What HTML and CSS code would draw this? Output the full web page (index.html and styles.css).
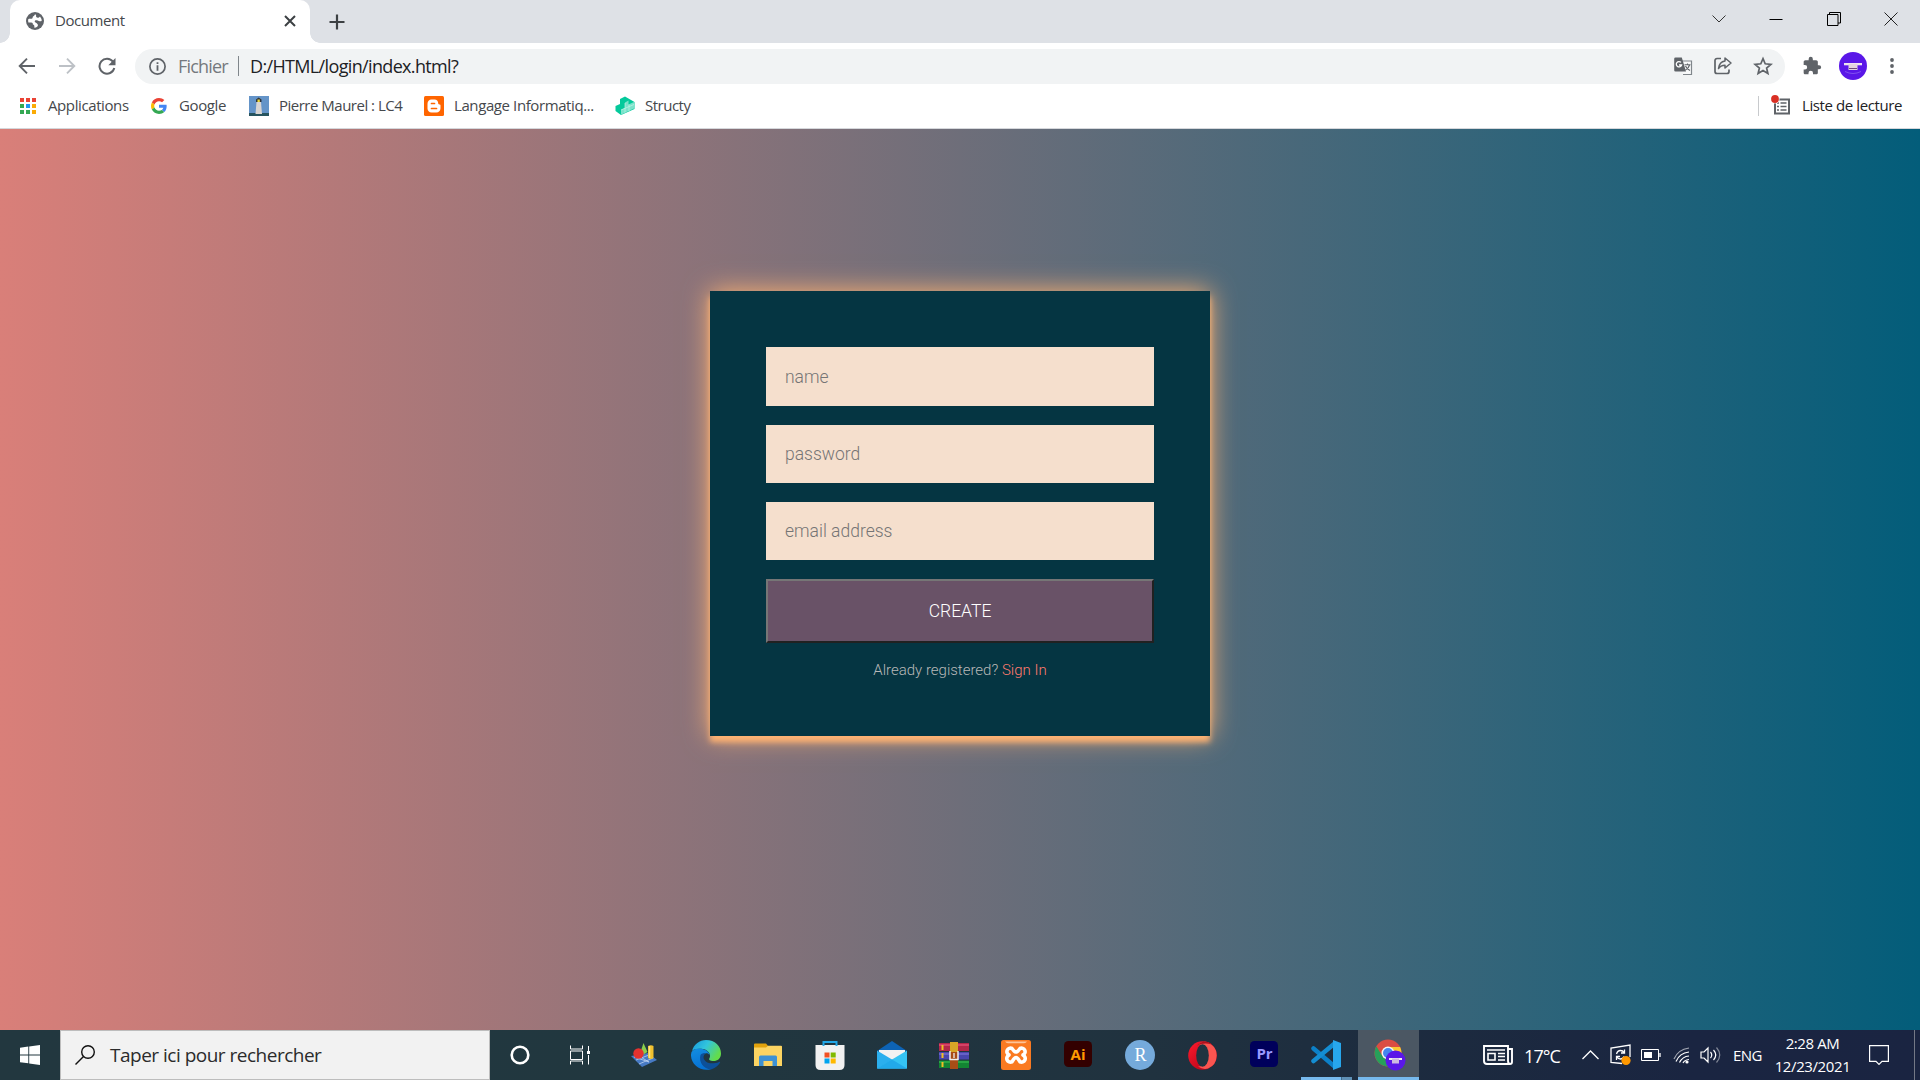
FILE: index.html
```html
<!DOCTYPE html>
<html lang="fr">
<head>
<meta charset="utf-8">
<title>Document</title>
<link rel="stylesheet" href="styles.css">
</head>
<body>
<div class="screen">
  <header class="tabstrip">
    <div class="tab">
      <svg class="globe" width="18" height="18" viewBox="0 0 18 18"><circle cx="9" cy="9" r="9" fill="#5f6368"/><path d="M9.3 2.2c-1 .8-.9 1.6-2 2-.9.5-.3 1.600-1.100 2.300-.9.5-2.400.3-3.900.4A7 7 0 0 0 2.400 10.500h2.800c1.500 0 1.600.8 1.700 2 .9.2 1.600.400 1.500 3.200C10.900 16 12.500 14 11.800 12.600c-.7-1.700-3-1.800-3.100-3-.1-1.300 1.300-1.700 2.400-1.300 1.100.500 1.500 1.200 4.600.6A7 7 0 0 0 14 4.400c-1 1.600-3.700 1.700-3.900.2-.1-1 .5-1.400-.8-2.400z" fill="#fff"/></svg>
      <span class="tab-title">Document</span>
      <svg class="tab-close" width="12" height="12" viewBox="0 0 12 12" stroke="#3c4043" stroke-width="2"><path d="M1 1l10 10M11 1L1 11"/></svg>
    </div>
    <svg class="newtab" width="16" height="16" viewBox="0 0 16 16" stroke="#3c4043" stroke-width="2.200"><path d="M8 .5v15M.5 8h15"/></svg>
    <div class="window-controls">
      <svg width="14" height="14" viewBox="0 0 14 14" fill="none" stroke="#333"><path d="M.5 3.500L7 10l6.500-6.500"/></svg>
      <svg width="14" height="14" viewBox="0 0 14 14" stroke="#000"><path d="M.5 7.500h13"/></svg>
      <svg width="14" height="14" viewBox="0 0 14 14" fill="none" stroke="#000"><path d="M.5 2.500h10.500v11H.5zM2.500 2.500v-2h11v10.500h-2.500"/></svg>
      <svg width="14" height="14" viewBox="0 0 14 14" stroke="#222"><path d="M.5.500l13 13M13.500.500l-13 13"/></svg>
    </div>
  </header>

  <nav class="toolbar">
    <svg class="nav-icon" width="18" height="18" viewBox="0 0 18 18" fill="none" stroke="#5f6368" stroke-width="1.900"><path d="M17 9H2M9 1.700L1.700 9 9 16.300"/></svg>
    <svg class="nav-icon" width="18" height="18" viewBox="0 0 18 18" fill="none" stroke="#bdc1c6" stroke-width="1.900"><path d="M1 9h15M9 1.700L16.300 9 9 16.300"/></svg>
    <svg class="nav-icon" width="18" height="18" viewBox="0 0 18 18"><path d="M15 4.600A7.500 7.500 0 1 0 16.300 11" fill="none" stroke="#5f6368" stroke-width="2"/><path d="M17.500 1v7.200h-7.200z" fill="#5f6368"/></svg>
    <div class="omnibox">
      <svg width="17" height="17" viewBox="0 0 17 17"><circle cx="8.500" cy="8.500" r="7.600" fill="none" stroke="#5f6368" stroke-width="1.700"/><path d="M7.600 4.200h1.800v1.900H7.600zM7.600 7.300h1.800v5.500H7.600z" fill="#5f6368"/></svg>
      <span class="scheme">Fichier</span>
      <span class="bar"></span>
      <span class="url">D:/HTML/login/index.html?</span>
      <div class="page-actions">
        <svg width="20" height="20" viewBox="0 0 20 20"><path d="M8 5h10.500v13.500H10" fill="#f8f9fa" stroke="#80868b" stroke-width="1.200"/><path d="M2.500 1.500h6.300l4.200 14H2.500a1.300 1.300 0 0 1-1.300-1.300V2.800a1.300 1.300 0 0 1 1.300-1.300z" fill="#5f6368"/><path d="M8 6.400A2.700 2.700 0 1 0 8.600 9H6" fill="none" stroke="#fff" stroke-width="1.300"/><path d="M11.500 8.800h6M14.500 7.500v1.300M16.500 9c-.5 2-2 4-4 5M12.500 10c.8 2 2.500 3.500 4.500 4.500" fill="none" stroke="#5f6368" stroke-width="1.100"/></svg>
        <svg width="20" height="20" viewBox="0 0 20 20" fill="none" stroke="#5f6368" stroke-width="1.700" stroke-linejoin="round"><path d="M8 2.500H4a2 2 0 0 0-2 2v11a2 2 0 0 0 2 2h10a2 2 0 0 0 2-2v-2"/><path d="M12 2l6 5-6 5V9.200c-3 0-5 .8-6.500 3.300C6 8.500 8 5.500 12 5z" stroke-width="1.500"/></svg>
        <svg width="20" height="20" viewBox="0 0 20 20"><path d="M10 2.600l2.200 5.200 5.700.5-4.300 3.700 1.300 5.500-4.900-2.900-4.900 2.900 1.300-5.500L2.100 8.300l5.700-.5z" fill="none" stroke="#5f6368" stroke-width="1.700"/></svg>
      </div>
    </div>
    <svg class="puzzle" width="20" height="20" viewBox="0 0 24 24" fill="#5f6368"><path d="M20.500 11H19V7c0-1.100-.9-2-2-2h-4V3.500a2.500 2.500 0 0 0-5 0V5H4c-1.100 0-2 .9-2 2v3.800h1.500a2.700 2.700 0 0 1 0 5.400H2V20c0 1.100.9 2 2 2h3.800v-1.500a2.700 2.700 0 0 1 5.400 0V22H17c1.100 0 2-.9 2-2v-4h1.500a2.500 2.500 0 0 0 0-5z"/></svg>
    <svg class="avatar" width="28" height="28" viewBox="0 0 28 28"><circle cx="14" cy="14" r="14" fill="#5a17e8"/><path d="M5 11h18v2.300H5z" fill="#eee4ef"/><path d="M9.500 12h9v6h-9z" fill="#e3d3e0"/><path d="M10 16.500h8" stroke="#6d4a78"/><path d="M6 19.500q8 4 16 0" stroke="#8a60f0" fill="none" stroke-width=".8"/></svg>
    <svg width="6" height="18" viewBox="0 0 6 18" fill="#5f6368"><circle cx="3" cy="3" r="1.900"/><circle cx="3" cy="9" r="1.900"/><circle cx="3" cy="15" r="1.900"/></svg>
  </nav>

  <div class="bookmarks">
    <div class="bookmark"><svg width="20" height="20" viewBox="0 0 20 20"><path d="M2 2h4v4H2zM8 2h4v4H8zM14 2h4v4h-4z" fill="#ea4335"/><path d="M2 8h4v4H2zM2 14h4v4H2zM8 14h4v4H8z" fill="#34a853"/><path d="M8 8h4v4H8z" fill="#2196f3"/><path d="M14 8h4v4h-4zM14 14h4v4h-4z" fill="#fbab05"/></svg><span>Applications</span></div>
    <div class="bookmark"><svg width="20" height="20" viewBox="-6 -6 60 60"><path fill="#ea4335" d="M24 9.500c3.540 0 6.710 1.220 9.210 3.600l6.850-6.850C35.900 2.380 30.470 0 24 0 14.620 0 6.510 5.380 2.560 13.220l7.980 6.190C12.430 13.720 17.740 9.500 24 9.500z"/><path fill="#4285f4" d="M46.980 24.550c0-1.570-.15-3.090-.38-4.550H24v9.020h12.940c-.58 2.960-2.260 5.480-4.780 7.180l7.730 6c4.510-4.180 7.090-10.360 7.090-17.650z"/><path fill="#fbbc05" d="M10.530 28.590c-.48-1.450-.76-2.990-.76-4.590s.27-3.140.76-4.590l-7.980-6.190C.92 16.460 0 20.120 0 24c0 3.880.92 7.540 2.560 10.780z"/><path fill="#34a853" d="M24 48c6.480 0 11.930-2.130 15.890-5.810l-7.730-6c-2.150 1.450-4.920 2.300-8.160 2.300-6.260 0-11.570-4.220-13.470-9.910l-7.980 6.190C6.510 42.620 14.620 48 24 48z"/></svg><span>Google</span></div>
    <div class="bookmark"><svg width="20" height="20" viewBox="0 0 20 20"><path fill="#6494c8" d="M0 0h20v20H0z"/><path fill="#27545f" d="M0 17h20v3H0z"/><path fill="#d9d5d2" d="M7.500 6h4.500l1 12H6.500z"/><path fill="#30343a" d="M7 6V3.500L9.700 1.500l2.800 2V6z"/><path fill="#f0dc35" d="M8.500 3.500h2.300V6H8.500z"/></svg><span class="tight">Pierre Maurel : LC4</span></div>
    <div class="bookmark"><svg width="20" height="20" viewBox="0 0 20 20"><rect width="20" height="20" rx="1.500" fill="#ff6500"/><path d="M7.500 3.500h3c2.200 0 3.700 1.500 3.700 3.600 0 1 .3 1.400 1.200 1.500.8 0 1.100.4 1.100 1v2.600c0 2.500-1.700 4.300-4.200 4.300H7.600c-2.500 0-4.100-1.700-4.100-4V7.700c0-2.500 1.600-4.200 4-4.200z" fill="#fff"/><path d="M7.500 7.500h3M7.500 12.500h5" stroke="#ff6500" stroke-width="1.700" stroke-linecap="round"/></svg><span>Langage Informatiq...</span></div>
    <div class="bookmark"><svg width="20" height="20" viewBox="0 0 20 20"><path d="M5 3l5-2.500L19.500 6v7L6 19 .5 15v-5L5 8z" fill="#04c99b"/><path d="M10 6.500l3.500-2v4l5.500-2.500v6.500L6 18.700v-5l4-2z" fill="#7be3cb"/><path d="M10 7v9.500M14 8.500v6.500M6 14l13-5.500" stroke="#c0f3e6" stroke-width=".7"/></svg><span class="tight">Structy</span></div>
    <div class="reading-list"><svg width="20" height="22" viewBox="0 0 20 22"><path d="M4 4.500h14v14H4z" fill="none" stroke="#5f6368" stroke-width="2"/><path d="M9.500 8h6M9.500 11.500h6M9.500 15h6M6 8h2M6 11.500h2M6 15h2" stroke="#5f6368" stroke-width="1.500"/><circle cx="4" cy="4" r="4.600" fill="#fff"/><circle cx="4" cy="4" r="3.900" fill="#d93025"/></svg><span>Liste de lecture</span></div>
  </div>

  <main class="page">
    <form class="card">
      <input type="text" placeholder="name">
      <input type="password" placeholder="password">
      <input type="text" placeholder="email address">
      <button type="button">CREATE</button>
      <p class="message">Already registered? <a href="#">Sign In</a></p>
    </form>
  </main>

  <footer class="taskbar">
    <div class="start"><svg width="20" height="20" viewBox="0 0 20 20" fill="#fff"><path d="M0 2.800l8.300-1.200v7.900H0zM9.200 1.400L20 0v9.500H9.200zM0 10.400h8.300v7.900L0 17.200zM9.200 10.400H20V20L9.200 18.500z"/></svg></div>
    <div class="search"><svg width="20" height="20" viewBox="0 0 20 20" fill="none" stroke="#111" stroke-width="1.400"><circle cx="13" cy="7" r="6.300"/><path d="M8.500 11.500L.5 19.500"/></svg><span>Taper ici pour rechercher</span></div>
    <div class="apps">
      <div class="app"><svg width="20" height="20" viewBox="0 0 20 20"><circle cx="10" cy="10" r="8.300" fill="none" stroke="#fff" stroke-width="2.600"/></svg></div>
      <div class="app task-view"><svg width="20" height="20" viewBox="0 0 20 20" fill="none" stroke="#fff" stroke-width="1"><path d="M.5.500v3.500h12V.500M.5 19.500V16h12v3.500M.5 6h12v8.500H.5zM18.500 1v5M18.500 10v9.500"/><path d="M17 6h3v3h-3z" fill="#fff" stroke="none"/></svg></div>
      <div class="app"><svg width="28" height="26" viewBox="0 0 28 26"><path d="M1 14l17-3 9 7-15 7z" fill="#477ac4"/><path d="M4 15l15 5M9 14l10 6M6 18l13-5M9 22l14-6" stroke="#bcd1ef" stroke-width=".8"/><path d="M13.500 1l4 9-5 3-2-3z" fill="#8bcf4c"/><circle cx="8.500" cy="11.500" r="5.200" fill="#e5322f"/><path d="M18 4q3-1.500 5.500 0v12q-3 1.800-5.500 0z" fill="#f0c02e"/><path d="M19.500 4v12" stroke="#fae48a" stroke-width="1.500"/></svg></div>
      <div class="app"><svg width="30" height="30" viewBox="0 0 30 30"><defs><linearGradient id="e1" x1="0" x2="1" y1="0" y2=".5"><stop offset="0" stop-color="#1597df"/><stop offset=".5" stop-color="#32c5dc"/><stop offset="1" stop-color="#63dc4b"/></linearGradient><linearGradient id="e2" y2="1" x2=".3"><stop stop-color="#138ee0"/><stop offset="1" stop-color="#0671d4"/></linearGradient></defs><path d="M1 11C3 4 8.500 0 15 0c9 0 15 6 15 13.500 0 5-3.500 7.500-7.500 7.500-3.500 0-5-1.300-4.200-2.500C20.500 15.500 18 10 12 9 7 8.200 3 9 1 11z" fill="url(#e1)"/><path d="M.5 12C3 8.500 8.500 7.800 13 9.500c3.500 1.200 5.500 3.500 5.500 5.500-3-4-8 0-7 5 1 5.500 5 8.500 9 9-10 3.500-21-4-20.500-14.500z" fill="url(#e2)"/><path d="M9.500 15c-2 7 3 14.500 11 14.300 3.500-1 6.500-3.300 8.500-6.500.5-.9-.3-1.200-1-.9-8 3.300-15 .5-15.500-4.400 0-2 1-3.500 2-4.500-2 0-4 .6-5 2z" fill="#0d5099"/></svg></div>
      <div class="app"><svg width="28" height="24" viewBox="0 0 28 24"><path d="M0 1.500Q0 .5 1 .5h11l2.500 3H28V8H0z" fill="#e2a20c"/><path d="M0 4.500h12l2-1.800h13q1 0 1 1V23H0z" fill="#fcd462"/><path d="M5 23v-9q0-1.500 1.500-1.500h15q1.500 0 1.500 1.500v9h-4.500v-5h-9v5z" fill="#3d91d3"/></svg></div>
      <div class="app"><svg width="30" height="30" viewBox="0 0 30 30"><path d="M.5 5h29v20q0 5-5 5h-19q-5 0-5-5z" fill="#f1f1f1"/><path d="M8.500 6V2h13v4" fill="none" stroke="#22a7e8" stroke-width="2"/><path d="M9.500 12.500h5v5h-5z" fill="#f25022"/><path d="M15.700 12.500h5v5h-5z" fill="#7fba00"/><path d="M9.500 18.500h5v5h-5z" fill="#00a4ef"/><path d="M15.700 18.500h5v5h-5z" fill="#ffb900"/></svg></div>
      <div class="app"><svg width="30" height="28" viewBox="0 0 30 28"><path d="M0 10L15 0l15 10z" fill="#0d63b5"/><path d="M2 9h26v10H2z" fill="#f2f2f2"/><path d="M0 9.500L30 27.500H0z" fill="#2bafee"/><path d="M30 9.500V27.500H0z" fill="#35c3f3"/><path d="M15 18.500l15 9H0z" fill="#1b9ee6" opacity=".7"/></svg></div>
      <div class="app"><svg width="30" height="27" viewBox="0 0 30 27"><path d="M0 1h30v8H0z" fill="#b32749"/><path d="M0 10h30v7.500H0z" fill="#4846ad"/><path d="M0 18.500h30V26H0z" fill="#138533"/><path d="M0 3h30" stroke="#e04c72" stroke-width="1.500"/><path d="M0 12h30" stroke="#716bd0" stroke-width="1.500"/><path d="M0 20h30" stroke="#31b04b" stroke-width="1.500"/><path d="M3.500 3v5M3.500 11v5M3.500 20v5" stroke="#f0be25" stroke-width="2"/><path d="M11 0h8v10h-8z" fill="#d8a527"/><path d="M11 10h8v17h-8z" fill="#a84d16"/><path d="M11 9v8.500h8V9" fill="none" stroke="#eee" stroke-width="1.500"/><path d="M15 11v5" stroke="#eee" stroke-width="1.300"/></svg></div>
      <div class="app"><svg width="30" height="30" viewBox="0 0 30 30"><rect width="30" height="30" rx="2.500" fill="#fa7a22"/><path d="M4 1.500h22q-1 1.700-3 1.700H7Q5 3.200 4 1.500z" fill="#fdc499"/><path d="M11 8.500a3.300 3.300 0 1 0-3 6.500 3.300 3.300 0 1 0 3 6.800l2-3q2-2.500 4 0l2 3a3.300 3.300 0 1 0 3-6.800 3.300 3.300 0 1 0-3-6.500l-2 2.500q-2 2-4 0z" fill="none" stroke="#fff" stroke-width="3.600" stroke-linejoin="round"/></svg></div>
      <div class="app raised"><svg width="28" height="26" viewBox="0 0 28 26"><rect width="28" height="26" rx="4.500" fill="#330000"/><text x="14" y="18.500" text-anchor="middle" class="adobe" fill="#ff9a00">Ai</text></svg></div>
      <div class="app"><svg width="30" height="30" viewBox="0 0 30 30"><circle cx="15" cy="15" r="15" fill="#75aadb"/><text x="15.500" y="21" text-anchor="middle" class="rstudio">R</text></svg></div>
      <div class="app"><svg width="29" height="29" viewBox="0 0 29 29"><defs><linearGradient id="op" x2="1" y2="1"><stop stop-color="#ff1b2d"/><stop offset="1" stop-color="#a70014"/></linearGradient></defs><ellipse cx="14.500" cy="14.500" rx="14.300" ry="14.300" fill="url(#op)"/><path d="M10 3.500Q14 0 19 1q10 4 9.700 13.500Q28.500 24 20 27.500q-5 1.500-10-2c12 1 12-23 0-22z" fill="#fa5550"/><path d="M9 4.500Q13 .6 17.500.6 21 .8 24 3.500 16 1 9 4.500z" fill="#b0101c"/><ellipse cx="14.500" cy="14.500" rx="6.300" ry="11.200" fill="#203440"/></svg></div>
      <div class="app raised"><svg width="28" height="26" viewBox="0 0 28 26"><rect width="28" height="26" rx="4.500" fill="#00005b"/><text x="14.500" y="18" text-anchor="middle" class="adobe" fill="#9999ff">Pr</text></svg></div>
      <div class="app running"><svg width="30" height="30" viewBox="0 0 30 30"><path d="M2.500 8.500L23 26" stroke="#0c80c8" stroke-width="4.500" stroke-linecap="round"/><path d="M2.500 21L23 4" stroke="#148dd2" stroke-width="4.500" stroke-linecap="round"/><path d="M22 0l8 3v24l-8 3z" fill="#27a7ed"/></svg></div>
      <div class="app active"><svg width="32" height="32" viewBox="0 0 32 32"><circle cx="14" cy="14" r="13.500" fill="#db4d42"/><path d="M2.300 7.300A13.500 13.500 0 0 0 14 27.500l6-10.500-11 1z" fill="#27a05a"/><path d="M14 8h12.100A13.500 13.500 0 0 1 14 27.500l6-10.500z" fill="#fbca32"/><circle cx="14" cy="14" r="6.500" fill="#f5f5f5"/><circle cx="14" cy="14" r="5" fill="#4486ef"/><circle cx="21.500" cy="21.500" r="10" fill="#5a17e8"/><path d="M15 19h13v2H15z" fill="#eee"/><path d="M18 19.500h7v5h-7z" fill="#cdbbe0"/></svg></div>
    </div>
    <div class="tray">
      <svg width="30" height="20" viewBox="0 0 30 20" fill="none" stroke="#fff"><path d="M1 1h24v15q0 3 2.500 3H4q-3 0-3-3zM25 4h4v13q0 2-2 2" stroke-width="1.900"/><path d="M4 5h18M15 8.500h7M15 11.500h7M15 15h7M5 8.500h7V15H5z" stroke-width="1.600"/></svg>
      <span class="weather">17°C</span>
      <svg width="17" height="10" viewBox="0 0 17 10" fill="none" stroke="#fff" stroke-width="1.300"><path d="M.5 9l8-8 8 8"/></svg>
      <svg width="22" height="22" viewBox="0 0 22 22" fill="none" stroke="#fff" stroke-width="1.300"><path d="M12 19.500L1 18.500V4l19-3v12M6.500 10q1-3.500 4-3.500 2.500 0 3.500 2M14.500 5.500V9H11M14 12.500q-1 2.500-3.500 2.500-2.500 0-3.500-2M6.500 16v-3.500H10"/><circle cx="16" cy="16.500" r="4.600" fill="#ff9800" stroke="none"/></svg>
      <svg width="20" height="12" viewBox="0 0 20 12" fill="none" stroke="#fff"><path d="M.5.500h17v11H.5z"/><path d="M3 3h8v6H3z" fill="#fff" stroke="none"/><path d="M19 4v4" stroke-width="1.300"/></svg>
      <svg width="17" height="17" viewBox="0 0 17 17" fill="none" stroke="#fff" stroke-width="1.200"><path d="M1 12Q5 2.500 16 1" opacity=".6"/><path d="M3 14.500Q6.500 6 16 5M6.500 15.500Q9.500 9.500 16 9M10 16q1.500-3 6-3.500"/><circle cx="14" cy="15" r="1.600" fill="#fff" stroke="none"/></svg>
      <svg width="21" height="18" viewBox="0 0 21 18" fill="none" stroke="#fff" stroke-width="1.200"><path d="M1 6h3l4-4v14l-4-4H1zM10.500 6q2.500 3 0 6M13.500 4q4.500 5 0 10"/><path d="M16.500 1.500q6.500 7.500 0 15" opacity=".45"/></svg>
      <span class="lang">ENG</span>
      <div class="clock"><span>2:28 AM</span><span>12/23/2021</span></div>
      <svg class="notify" width="20" height="20" viewBox="0 0 20 20" fill="none" stroke="#fff" stroke-width="1.200"><path d="M.6.600h18.800v15.800h-6.400l-3 3-3-3H.6z"/></svg>
    </div>
    <div class="peek"></div>
  </footer>
</div>
</body>
</html>
```
FILE: styles.css
```css
* { box-sizing: border-box; }
body { margin: 0; font-family: "Open Sans", "Noto Sans", sans-serif; }
svg { display: block; flex: none; }
.screen { width: 1920px; height: 1080px; display: flex; flex-direction: column; overflow: hidden; background: #fff; }
span { white-space: nowrap; }

.tabstrip { height: 43px; background: #dee1e6; display: flex; align-items: center; padding-left: 10px; }
.tab { position: relative; width: 300px; height: 43px; background: #fff; border-radius: 10px 10px 0 0; display: flex; align-items: center; padding: 0 14px 1px 16px; }
.tab::before, .tab::after { content: ""; position: absolute; bottom: 0; width: 10px; height: 10px; }
.tab::before { left: -10px; background: radial-gradient(circle at 0 0, #dee1e6 9.500px, #fff 10px); }
.tab::after { right: -10px; background: radial-gradient(circle at 100% 0, #dee1e6 9.500px, #fff 10px); }
.tab-title { margin-left: 11px; padding-bottom: 2px; font-size: 15px; letter-spacing: -.45px; color: #45484c; }
.tab-close { margin-left: auto; }
.newtab { margin-left: 19px; }
.window-controls { margin-left: auto; display: flex; gap: 43.300px; padding: 0 22px 6px 0; }

.toolbar { height: 44px; display: flex; align-items: center; padding: 2px 25px 0 18px; }
.nav-icon { margin-right: 22px; }
.omnibox { width: 1650px; height: 35px; margin-left: -3px; border-radius: 18px; background: #f1f3f4; display: flex; align-items: center; padding: 0 12px 0 14px; font-size: 18px; }
.scheme { margin-left: 12px; width: 60px; color: #75797e; letter-spacing: -.8px; }
.bar { width: 1px; height: 20px; background: #80868b; }
.url { margin-left: 11px; color: #202124; letter-spacing: -.65px; }
.page-actions { margin-left: auto; display: flex; gap: 20px; }
.puzzle { margin-left: 17px; }
.avatar { margin: 0 auto 0 17px; }

.bookmarks { height: 42px; display: grid; grid-template-columns: 131px 100px 175px 191px 200px 1fr; align-items: center; padding: 0 18px 4px; border-bottom: 1px solid #d5d7db; font-size: 15px; color: #45484c; letter-spacing: -.4px; }
.bookmark { display: flex; align-items: center; gap: 10px; }
.bookmark span, .reading-list span { padding-bottom: 2px; }
.bookmark .tight { letter-spacing: -.5px; }
.reading-list { justify-self: end; display: flex; align-items: center; gap: 11px; height: 20px; padding-left: 12px; border-left: 1px solid #c8cacd; color: #202124; }

.page { height: 901px; background: linear-gradient(90deg, #d97f79, #035d7a); display: flex; justify-content: center; align-items: flex-start; padding-top: 162px; }
.card { width: 500px; height: 445px; background: #053542; padding: 56.400px 56px 0; box-shadow: 0 0 25px 0 #ffb373, 0 6px 6px 0 #ffb373; font-family: Roboto, sans-serif; }
.card input { display: block; width: 388px; height: 58.400px; margin: 0 0 18.750px; padding: 1px 19px 0; border: 0; border-radius: 0; outline: 0; background: #f5dfcd; font: 300 17.500px Roboto, sans-serif; }
.card input::placeholder { color: #757575; }
.card button { display: block; width: 388px; height: 64px; padding: 0; border: 2px solid; border-color: #767676 #212121 #212121 #767676; border-radius: 0; background: #695267; color: #fff; font: 300 17.500px Roboto, sans-serif; }
.message { margin: 18px 0 0; text-align: center; font-size: 15px; font-weight: 300; line-height: 18px; color: #b8b8b8; }
.message a { color: #ff7b6e; text-decoration: none; }

.taskbar { height: 50px; display: flex; align-items: center; background: linear-gradient(90deg, #22373f 0%, #21373f 35%, #20323f 60%, #1c2a3f 76%, #1a2541 88%, #1a2441 100%); color: #fff; }
.start { width: 60px; display: flex; justify-content: center; }
.search { width: 430px; height: 50px; border: 1px solid #bdbdbd; background: #f2f2f2; display: flex; align-items: center; padding-left: 14px; gap: 15px; font-size: 19px; color: #2b2b2b; letter-spacing: -.5px; }
.apps { display: flex; margin-left: -1px; height: 50px; }
.app { width: 62px; height: 50px; display: flex; align-items: center; justify-content: center; }
.task-view { padding-right: 4px; }
.raised { padding-bottom: 3px; }
.adobe { font: 700 15px "Open Sans", sans-serif; }
.rstudio { font: 18px "Liberation Serif", serif; fill: #fff; }
.running { background: linear-gradient(90deg, #76b9ed 40px, #426b8b 40px, #426b8b 41px, #5f90b5 41px) 6px 100% / 51px 3px no-repeat; }
.active { width: 61px; margin-left: 1px; background: #4b5763; border-bottom: 3px solid #76b9ed; padding: 3px 0 0 2px; }
.tray { flex: 1; display: grid; grid-template-columns: 41px 58px 28px 31px 32px 27px 33px 32px 104px 1fr; align-items: center; padding-left: 64px; }
.weather { font-size: 18px; letter-spacing: -.9px; padding-top: 1px; }
.lang { font-size: 15px; letter-spacing: -.6px; }
.clock { display: flex; flex-direction: column; align-items: center; justify-self: center; margin-right: 9px; font-size: 15px; line-height: 23px; letter-spacing: -.4px; }
.notify { justify-self: start; }
.peek { width: 6px; height: 50px; border-left: 1px solid #737886; }
```
